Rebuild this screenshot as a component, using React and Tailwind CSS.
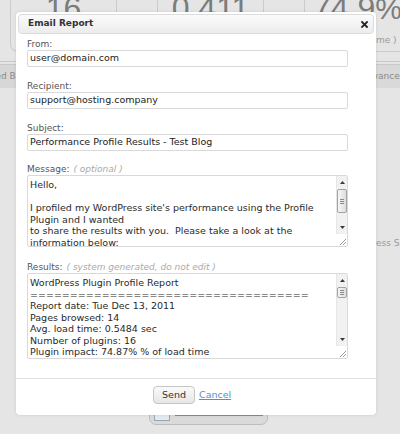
import React from 'react';

const messageLines = [
  'Hello,',
  '',
  "I profiled my WordPress site's performance using the Profile",
  'Plugin and I wanted',
  'to share the results with you.  Please take a look at the',
  'information below:',
];

const resultLines = [
  'WordPress Plugin Profile Report',
  '===================================',
  'Report date: Tue Dec 13, 2011',
  'Pages browsed: 14',
  'Avg. load time: 0.5484 sec',
  'Number of plugins: 16',
  'Plugin impact: 74.87% % of load time',
];

function StatBox({ value, unit, caption }) {
  return (
    <div className="flex h-[52px] w-[107px] shrink-0 flex-col items-center rounded-b-[8px] border-x border-b border-[#cbcbcb]">
      <div className="-mt-[8px] flex h-[36px] items-baseline whitespace-nowrap font-['Liberation_Sans',sans-serif] text-[32px] leading-[32px] text-[#7c7c7c]">
        {value}
        {unit && <span className="text-[30px]">{unit}</span>}
      </div>
      {caption && (
        <div className="mt-[6px] whitespace-nowrap text-[9px] leading-[12px] text-[#9a9a9a]">{caption}</div>
      )}
    </div>
  );
}

function Scrollbar({ thumb }) {
  return (
    <div className="flex w-[11px] shrink-0 flex-col">
      <div className="flex flex-1 flex-col border-l border-[#e6e6e6] bg-[#f1f1f1]">
        <div className="flex h-[12px] items-center justify-center">
          <svg width="5" height="3" viewBox="0 0 5 3">
            <path d="M0 3 L2.5 0 L5 3 Z" fill="#3a3a3a" />
          </svg>
        </div>
        <div className="flex-1 pt-[1px]">
          <div className={`${thumb} flex flex-col items-center justify-center gap-[1px] rounded-[2px] border border-[#a2a2a2] bg-gradient-to-r from-[#f7f7f7] to-[#dedede]`}>
            <div className="h-[1px] w-[4px] bg-[#8a8a8a]" />
            <div className="h-[1px] w-[4px] bg-[#8a8a8a]" />
            <div className="h-[1px] w-[4px] bg-[#8a8a8a]" />
          </div>
        </div>
        <div className="flex h-[13px] items-center justify-center">
          <svg width="5" height="3" viewBox="0 0 5 3">
            <path d="M0 0 L2.5 3 L5 0 Z" fill="#3a3a3a" />
          </svg>
        </div>
      </div>
      <div className="flex h-[12px] items-end justify-end bg-white pb-[1px] pr-[1px]">
        <svg width="7" height="7" viewBox="0 0 7 7">
          <path d="M1 7 L7 1 M4 7 L7 4" stroke="#9a9a9a" strokeWidth="1" />
        </svg>
      </div>
    </div>
  );
}

function TextBox({ lines, height, thumb }) {
  return (
    <div className={`${height} flex w-[321px] overflow-hidden rounded-[2px] border border-[#d9d9d9] bg-white`}>
      <div className="flex-1 overflow-hidden whitespace-pre pl-[2px] pt-[3px] text-[9.5px] leading-[11.5px] text-[#2a2a2a]">
        {lines.join('\n')}
      </div>
      <Scrollbar thumb={thumb} />
    </div>
  );
}

function Label({ text, hint, className = '' }) {
  return (
    <div className={`h-[12px] whitespace-nowrap text-[9px] leading-[12px] text-[#555] ${className}`}>
      {text}
      {hint && <span className="ml-[4px] italic text-[#aaa]">{hint}</span>}
    </div>
  );
}

function Field({ text }) {
  return (
    <div className="flex h-[17px] w-[321px] items-center rounded-[2px] border border-[#d9d9d9] bg-white px-[2px] text-[9.5px] text-[#222]">
      {text}
    </div>
  );
}

export default function App() {
  return (
    <div className="relative h-[434px] w-[400px] overflow-hidden bg-[#e5e5e5] font-['DejaVu_Sans',sans-serif]">
      {/* page behind the overlay */}
      <div>
        <div className="flex gap-[40px] pl-[10px]">
          <StatBox value="16" />
          <StatBox value="0.411" />
          <StatBox value="74.9" unit="%" caption="( % of load time )" />
        </div>

        <div className="mt-[9px] h-[4px] border-y border-[#c9c9c9]" />

        <div className="flex h-[23px]">
          <div className="-ml-[40px] flex w-[107px] shrink-0 items-center whitespace-nowrap rounded-t-[4px] border-x border-[#c6c6c6] bg-[#d7d7d7] px-[8px] text-[9px] text-[#8a8a8a]">
            Detailed Breakdown
          </div>
          <div className="ml-[285px] flex w-[100px] shrink-0 items-center whitespace-nowrap rounded-t-[4px] border-x border-[#c6c6c6] bg-[#d9d9d9] px-[8px] text-[9px] text-[#8a8a8a]">
            Advanced Metrics
          </div>
        </div>

        <div className="mt-[149px] whitespace-nowrap pl-[344px] text-[9px] leading-[12px] text-[#9a9a9a]">
          WordPress Settings
        </div>

        <div className="mt-[151px] pl-[149px]">
          <div className="flex h-[25px] w-[119px] items-center gap-[5px] rounded-b-[7px] border border-[#bdbdbd] bg-[#dadada] px-[4px] pt-[4px]">
            <div className="h-[13px] w-[16px] border border-[#9aa6b8] bg-[#e4e9f0]" />
            <div className="h-[2px] flex-1 bg-[#8c8c8c]" />
          </div>
        </div>
      </div>

      {/* dialog */}
      <div className="absolute left-[16px] top-[12px] w-[360px] rounded-[4px] bg-white shadow-[0_0_3px_rgba(0,0,0,0.12)]">
        <div className="mx-[2px] mt-[2px] flex h-[20px] items-center justify-between rounded-[4px] border border-[#dcdcdc] bg-gradient-to-b from-[#fbfbfb] to-[#ececec] pl-[9px] pr-[5px]">
          <span className="text-[9px] font-bold text-[#333]">Email Report</span>
          <svg width="7" height="7" viewBox="0 0 7 7">
            <path d="M1 1 L6 6 M6 1 L1 6" stroke="#222" strokeWidth="1.8" strokeLinecap="square" />
          </svg>
        </div>

        <div className="pl-[11px]">
          <Label text="From:" className="mt-[4px]" />
          <Field text="user@domain.com" />

          <Label text="Recipient:" className="mt-[13px]" />
          <Field text="support@hosting.company" />

          <Label text="Subject:" className="mt-[13px]" />
          <Field text="Performance Profile Results - Test Blog" />

          <Label text="Message:" hint="( optional )" className="mt-[12px]" />
          <TextBox lines={messageLines} height="h-[72px]" thumb="h-[24px]" />

          <Label text="Results:" hint="( system generated, do not edit )" className="mt-[14px]" />
          <TextBox lines={resultLines} height="h-[86px]" thumb="h-[11px]" />
        </div>

        <div className="mt-[19px] border-t border-[#e2e2e2]" />

        <div className="flex items-center gap-[4px] pb-[11px] pl-[137px] pt-[7px]">
          <button className="flex h-[18px] w-[42px] items-center justify-center rounded-[4px] border border-[#c6c6c6] bg-gradient-to-b from-[#fafafa] to-[#e6e6e6] text-[9.5px] text-[#333]">
            Send
          </button>
          <a href="#" className="text-[9.5px] text-[#4b93cc] underline">
            Cancel
          </a>
        </div>
      </div>
    </div>
  );
}
